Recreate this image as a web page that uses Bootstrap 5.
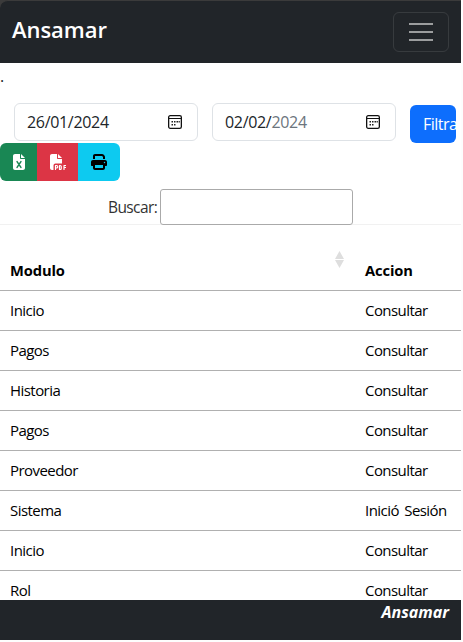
<!DOCTYPE html>
<html lang="es">
<head>
<meta charset="utf-8">
<meta name="viewport" content="width=device-width, initial-scale=1">
<title>Ansamar</title>
<link href="https://cdn.jsdelivr.net/npm/bootstrap@5.3.0/dist/css/bootstrap.min.css" rel="stylesheet">
<style>
html,body{height:100%}
body{font-family:"Open Sans","Noto Sans",sans-serif;font-size:16px;background:#fdfdfd;overflow:hidden}
.app{width:461px;height:640px;background:#fff;overflow:hidden}
.topbar{height:63px;padding:0 12px;border-top:1px solid #3b3b3b;border-top-left-radius:8px}
.topwrap{background:#3b3b3b}
.topbar .navbar-brand{font-size:22px;font-weight:600;letter-spacing:-.05px;line-height:30px;padding:0 0 6px;color:#fff}
.topbar .navbar-toggler{padding:4px 12px;width:56px;height:40px;margin-top:0;border-radius:6px}
.topbar .toggler-lines{display:block;width:30px;height:30px}
.dot{height:40px;font-size:16px;line-height:24px;padding-top:1px}
.filters{height:40px;padding-left:14px;gap:14px}
.datebox{width:184px;height:38px;padding:0 15px 0 12px;border-radius:6px;letter-spacing:-.32px;color:#212529}
.btn-filter{width:46px;height:38px;margin-top:2px;padding:6px 0 6px 13px;overflow:hidden;text-align:left;white-space:nowrap;border:0;letter-spacing:-.5px}
.exports .btn-group>.btn{height:38px;padding:0;border:0;margin:0!important;display:flex;align-items:center;justify-content:center;flex:none}
.b-xls{width:37px}.b-pdf{width:41px}.b-prt{width:42px}
.search{height:44px;padding:8px 0 0 108px;border-bottom:1px solid #f1f1f1;color:#333}
.search label{width:52px;letter-spacing:-.6px;line-height:36px;font-size:15.5px}
.search input{width:193px;height:36px;border:1px solid #aaa;border-radius:3px;background:#fff;flex:none}
.log{width:461px;margin:0;table-layout:fixed;color:#000;font-size:15px;letter-spacing:-.55px;word-spacing:2px;--bs-table-color:#000}
.log th,.log td{height:40px;padding:0 0 0 10px;border-bottom:1px solid #b0b0b0;line-height:39px;white-space:nowrap}
.log td{font-weight:400}
.log th{height:66px;padding-top:24px;line-height:40px;font-weight:700;letter-spacing:-.1px;font-size:14.7px}
.log th .sorter{float:right;margin:1px 11px 0 0;display:block}
.holder{height:376px;margin-top:-1px;overflow:hidden}
.foot{height:40px;padding:0 12px;font-size:16px;line-height:25px}
</style>
</head>
<body>
<div class="app d-flex flex-column">
  <div class="topwrap flex-shrink-0">
    <nav class="navbar navbar-dark bg-dark topbar d-flex align-items-center justify-content-between">
      <a class="navbar-brand m-0" href="#">Ansamar</a>
      <button class="navbar-toggler" type="button" aria-label="Menú">
        <svg class="toggler-lines" viewBox="0 0 30 30" shape-rendering="crispEdges"><path d="M3 7h24M3 15h24M3 23h24" stroke="#9b9d9e" stroke-width="2"/></svg>
      </button>
    </nav>
  </div>
  <div class="dot flex-shrink-0">.</div>
  <div class="filters d-flex flex-shrink-0">
    <div class="datebox border d-flex align-items-center justify-content-between flex-shrink-0"><span>26/01/2024</span>
      <svg width="14" height="14" viewBox="0 0 14 14"><rect x=".65" y=".65" width="12.7" height="12.7" rx="1.6" fill="none" stroke="#111" stroke-width="1.3"/><path d="M1 3.5h12" stroke="#111"/><path d="M6 6h1.5v1.5H6zM8.5 6H10v1.5H8.5zM3.5 6H5v1.5H3.5zM10.6 6h1.2v1.5h-1.2zM3.5 9H5v1.5H3.5zM6 9h1.5v1.5H6z" fill="#222"/></svg></div>
    <div class="datebox border d-flex align-items-center justify-content-between flex-shrink-0"><span>02/02/<span class="text-secondary">2024</span></span>
      <svg width="14" height="14" viewBox="0 0 14 14"><rect x=".65" y=".65" width="12.7" height="12.7" rx="1.6" fill="none" stroke="#111" stroke-width="1.3"/><path d="M1 3.5h12" stroke="#111"/><path d="M6 6h1.5v1.5H6zM8.5 6H10v1.5H8.5zM3.5 6H5v1.5H3.5zM10.6 6h1.2v1.5h-1.2zM3.5 9H5v1.5H3.5zM6 9h1.5v1.5H6z" fill="#222"/></svg></div>
    <button class="btn btn-primary btn-filter flex-shrink-0">Filtrar</button>
  </div>
  <div class="exports d-flex flex-shrink-0">
    <div class="btn-group">
      <button class="btn btn-success b-xls" aria-label="Excel"><svg width="12" height="16" viewBox="0 0 384 512"><path fill="#fff" d="M64 0C29 0 0 29 0 64v384c0 35 29 64 64 64h256c35 0 64-29 64-64V160H256c-18 0-32-14-32-32V0zm192 0v128h128z"/><path d="M130 244l124 184M254 244L130 428" stroke="#198754" stroke-width="48" stroke-linecap="round"/></svg></button>
      <button class="btn btn-danger b-pdf" aria-label="PDF"><svg width="16" height="16" viewBox="0 0 512 512"><path fill="#fff" d="M0 64C0 29 29 0 64 0h160v128c0 18 14 32 32 32h128v144H176c-35 0-64 29-64 64v144H64c-35 0-64-29-64-64zm384 64H256V0z"/><path fill="none" stroke="#fff" stroke-width="38" stroke-linecap="round" stroke-linejoin="round" d="M176 496V368h32a40 40 0 0 1 0 80h-32M304 368h24q32 0 32 32v64q0 32-32 32h-24zM496 368h-48v128M448 432h48"/></svg></button>
      <button class="btn btn-info b-prt" aria-label="Imprimir"><svg width="16" height="16" viewBox="0 0 512 512"><path d="M128 0C93 0 64 29 64 64v96h64V64h227l29 29v67h64V93c0-17-7-33-19-45l-29-29C388 7 372 0 355 0zM384 352v96H128v-96zm64 32h32c18 0 32-14 32-32v-96c0-35-29-64-64-64H64c-35 0-64 29-64 64v96c0 18 14 32 32 32h32v64c0 35 29 64 64 64h256c35 0 64-29 64-64zm-16-136a24 24 0 1 1 0 48 24 24 0 1 1 0-48z" fill-rule="evenodd"/></svg></button>
    </div>
  </div>
  <div class="search d-flex flex-shrink-0"><label for="q">Buscar:</label><input id="q" type="text"></div>
  <div class="holder flex-shrink-0">
    <table class="table log">
      <colgroup><col style="width:355px"><col></colgroup>
      <thead><tr><th><svg class="sorter" width="9" height="17" viewBox="0 0 9 17"><path d="M0 8L4.5 0 9 8zM0 9h9l-4.5 8z" fill="#dedede"/></svg>Modulo</th><th>Accion</th></tr></thead>
      <tbody>
        <tr><td>Inicio</td><td>Consultar</td></tr>
        <tr><td>Pagos</td><td>Consultar</td></tr>
        <tr><td>Historia</td><td>Consultar</td></tr>
        <tr><td>Pagos</td><td>Consultar</td></tr>
        <tr><td>Proveedor</td><td>Consultar</td></tr>
        <tr><td>Sistema</td><td>Inició Sesión</td></tr>
        <tr><td>Inicio</td><td>Consultar</td></tr>
        <tr><td>Rol</td><td>Consultar</td></tr>
      </tbody>
    </table>
  </div>
  <footer class="foot bg-dark text-white text-end fw-bold fst-italic flex-shrink-0">Ansamar</footer>
</div>
<script src="https://cdn.jsdelivr.net/npm/bootstrap@5.3.0/dist/js/bootstrap.bundle.min.js"></script>
</body>
</html>
